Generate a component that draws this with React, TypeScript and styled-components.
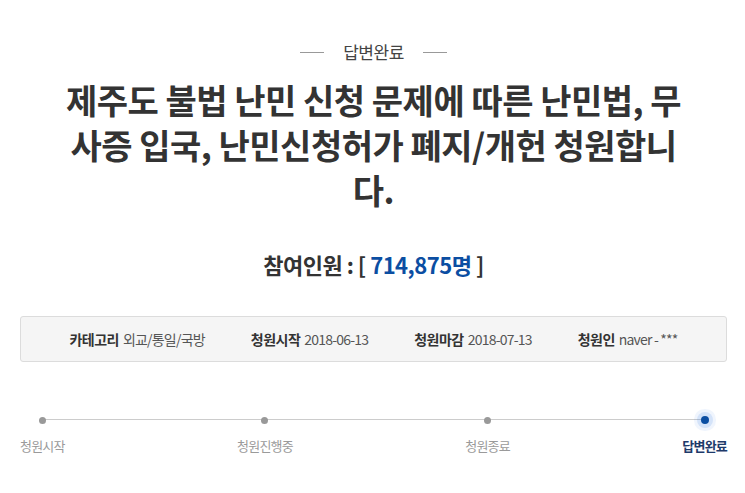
import React from 'react';
import styled, { createGlobalStyle } from 'styled-components';

const GlobalStyle = createGlobalStyle`
  html, body {
    margin: 0;
    padding: 0;
    background: #ffffff;
  }
  body {
    font-family: "Noto Sans CJK KR", "Noto Sans", sans-serif;
    color: #333;
  }
`;

const Page = styled.div`
  width: 745px;
  padding: 0 18px 0 20px;
  box-sizing: border-box;
  display: flex;
  flex-direction: column;
  align-items: center;
`;

const StatusLabel = styled.div`
  margin-top: 42px;
  display: flex;
  align-items: center;
  gap: 19px;
  font-size: 17px;
  line-height: 20px;
  color: #444;
  letter-spacing: -0.5px;
`;

const Dash = styled.span`
  width: 24px;
  height: 1px;
  background: #999;
`;

const Title = styled.h1`
  margin: 15px 0 0;
  width: 628px;
  text-align: center;
  font-size: 34px;
  line-height: 45px;
  font-weight: 700;
  color: #333;
  letter-spacing: -0.5px;
  word-break: break-all;
`;

const Count = styled.div`
  margin-top: 38px;
  font-size: 22px;
  line-height: 28px;
  font-weight: 700;
  color: #333;
  letter-spacing: -0.5px;
`;

const CountNumber = styled.span`
  color: #0b4ea2;
`;

const InfoBox = styled.ul`
  margin: 38px 0 0;
  padding: 0;
  list-style: none;
  width: 100%;
  height: 46px;
  box-sizing: border-box;
  background: #f5f5f5;
  border: 1px solid #dcdcdc;
  border-radius: 3px;
  display: flex;
  align-items: center;
  justify-content: center;
  gap: 46px;
`;

const InfoItem = styled.li`
  display: flex;
  align-items: center;
  gap: 4px;
  font-size: 14px;
  letter-spacing: -0.8px;
  color: #555;
`;

const InfoLabel = styled.strong`
  font-weight: 700;
  color: #333;
  letter-spacing: -0.5px;
`;

const Steps = styled.ol`
  position: relative;
  margin: 50px 0 0;
  padding: 0;
  list-style: none;
  width: 100%;
  display: flex;
  justify-content: space-between;

  &::before {
    content: '';
    position: absolute;
    top: 7px;
    left: 23px;
    right: 24px;
    height: 1px;
    background: #cccccc;
  }
`;

const Step = styled.li`
  display: flex;
  flex-direction: column;
  align-items: center;
  gap: 9px;
`;

const DotWrap = styled.div`
  width: 16px;
  height: 16px;
  display: flex;
  align-items: center;
  justify-content: center;
  position: relative;
`;

const Dot = styled.span<{ $active?: boolean }>`
  width: ${p => (p.$active ? 8 : 7)}px;
  height: ${p => (p.$active ? 8 : 7)}px;
  border-radius: 50%;
  background: ${p => (p.$active ? '#0b4ea2' : '#999999')};
  box-shadow: ${p =>
    p.$active
      ? '0 0 0 4px rgba(40, 120, 230, 0.14), 0 0 0 7px rgba(40, 120, 230, 0.07)'
      : 'none'};
`;

const StepLabel = styled.span<{ $active?: boolean }>`
  font-size: 13px;
  line-height: 18px;
  letter-spacing: -0.8px;
  color: ${p => (p.$active ? '#1e3a6a' : '#9a9a9a')};
  font-weight: ${p => (p.$active ? 700 : 400)};
`;

const info = [
  { label: '카테고리', value: '외교/통일/국방' },
  { label: '청원시작', value: '2018-06-13' },
  { label: '청원마감', value: '2018-07-13' },
  { label: '청원인', value: 'naver - ***' },
];

const steps = ['청원시작', '청원진행중', '청원종료', '답변완료'];

export default function App() {
  return (
    <>
      <GlobalStyle />
      <Page>
        <StatusLabel>
          <Dash />
          답변완료
          <Dash />
        </StatusLabel>
        <Title>
          제주도 불법 난민 신청 문제에 따른 난민법, 무사증 입국, 난민신청허가 폐지/개헌 청원합니다.
        </Title>
        <Count>
          참여인원 : [ <CountNumber>714,875명</CountNumber> ]
        </Count>
        <InfoBox>
          {info.map(item => (
            <InfoItem key={item.label}>
              <InfoLabel>{item.label}</InfoLabel>
              {item.value}
            </InfoItem>
          ))}
        </InfoBox>
        <Steps>
          {steps.map((s, i) => {
            const active = i === steps.length - 1;
            return (
              <Step key={s}>
                <DotWrap>
                  <Dot $active={active} />
                </DotWrap>
                <StepLabel $active={active}>{s}</StepLabel>
              </Step>
            );
          })}
        </Steps>
      </Page>
    </>
  );
}
